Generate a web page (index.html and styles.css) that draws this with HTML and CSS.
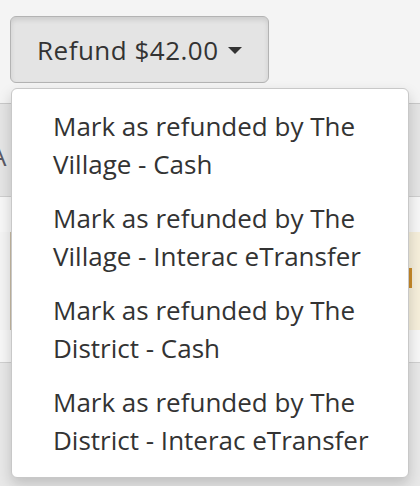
FILE: index.html
```html
<!DOCTYPE html>
<html lang="en">

<head>
    <meta charset="UTF-8">
    <meta name="viewport" content="width=device-width, initial-scale=1.0">
    <title>Refund</title>
    <link rel="stylesheet" href="styles.css">
</head>

<body>
    <div class="toolbar">
        <div class="btn-group">
            <button class="btn">Refund $42.00 <span class="caret"></span></button>
            <ul class="dropdown-menu">
                <li><a href="#">Mark as refunded by The Village - Cash</a></li>
                <li><a href="#">Mark as refunded by The Village - Interac eTransfer</a></li>
                <li><a href="#">Mark as refunded by The District - Cash</a></li>
                <li><a href="#">Mark as refunded by The District - Interac eTransfer</a></li>
            </ul>
        </div>
    </div>

    <!-- contenu derrière le menu -->
    <div class="panel">
        <div class="panel-head">A</div>
        <div class="panel-gap"></div>
        <div class="alert">
            <span class="alert-mark"></span>
        </div>
        <div class="panel-gap short"></div>
        <div class="panel-foot"></div>
    </div>
</body>

</html>
```

FILE: styles.css
```css
body {
    margin: 0;
    background-color: #f4f4f4;
    font-family: "Open Sans", "Liberation Sans", sans-serif;
    color: #333333;
    overflow: hidden;
}

.toolbar {
    padding: 16px 10px 0;
    height: 103px;
    box-sizing: border-box;
}

.btn-group {
    position: relative;
    display: inline-block;
}

.btn {
    display: flex;
    align-items: center;
    gap: 9px;
    height: 67px;
    padding: 0 26px 0 26px;
    background: #e4e4e4;
    border: 1px solid #b3b3b3;
    border-radius: 6px;
    box-shadow: inset 0 3px 5px rgba(0, 0, 0, 0.1);
    font-family: inherit;
    font-size: 26px;
    letter-spacing: 0.5px;
    color: #333333;
    cursor: pointer;
}

.caret {
    width: 0;
    height: 0;
    border-top: 7px solid #333333;
    border-left: 7px solid transparent;
    border-right: 7px solid transparent;
    margin-top: 2px;
}

.dropdown-menu {
    position: absolute;
    top: 72px;
    left: 1px;
    z-index: 10;
    width: 398px;
    box-sizing: border-box;
    margin: 0;
    padding: 10px 0;
    list-style: none;
    background: #ffffff;
    border: 1px solid #c8c8c8;
    border-radius: 6px;
    box-shadow: 0 6px 14px rgba(0, 0, 0, 0.18);
}

.dropdown-menu a {
    display: block;
    padding: 8px 30px 8px 41px;
    font-size: 26px;
    line-height: 38px;
    color: #333333;
    text-decoration: none;
}

.panel {
    margin-left: -40px;
}

.panel-head {
    height: 94px;
    box-sizing: border-box;
    background: #e5e5e5;
    border-top: 1px solid #c9c9c9;
    border-bottom: 1px solid #cfcfcf;
    padding-left: 30px;
    line-height: 104px;
    font-size: 26px;
    color: #5a5a66;
}

.panel-gap {
    height: 35px;
    background: #f7f7f7;
}

.panel-gap.short {
    height: 32px;
}

.alert {
    position: relative;
    height: 98px;
    margin-left: 50px;
    background: #f6efdb;
    border-left: 2px solid #c9bca5;
}

.alert-mark {
    position: absolute;
    left: 396px;
    top: 36px;
    width: 4px;
    height: 20px;
    background: #c98b2a;
}

.panel-foot {
    height: 130px;
    background: #e8e8e8;
    border-top: 1px solid #d0d0d0;
}
```
